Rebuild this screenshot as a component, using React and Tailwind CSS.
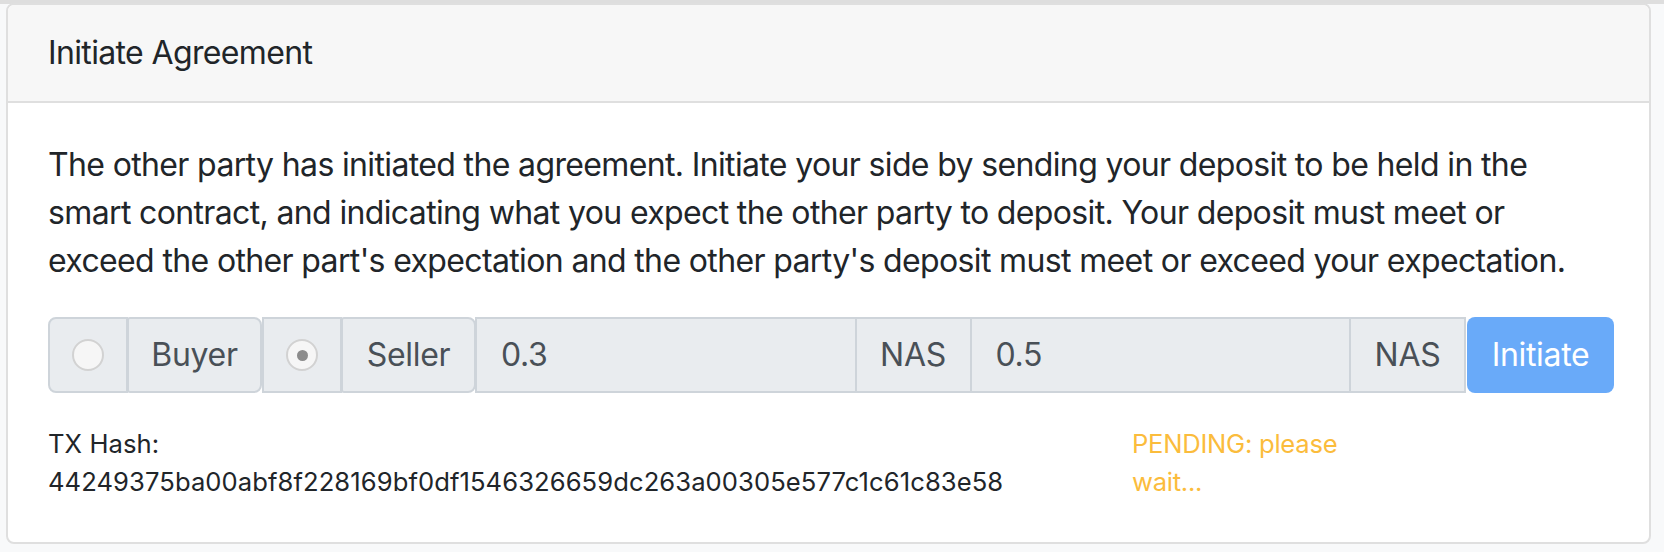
import React from "react";

function Radio({ checked }) {
  return (
    <div className="w-[32px] h-[32px] rounded-full border-2 border-[#d2d2d2] bg-[#f6f6f6] flex items-center justify-center">
      {checked ? <div className="w-[11px] h-[11px] rounded-full bg-[#8c8c8c]" /> : null}
    </div>
  );
}

export default function App() {
  const font = { fontFamily: "Inter, 'Liberation Sans', sans-serif" };
  return (
    <div className="min-h-[552px] bg-[#f8f9fa] text-[#212529]" style={font}>
      <div className="h-[4px] bg-[#dedede]" />
      <div className="ml-[6px] mr-[13px] -mt-[1px] border-2 border-[#dfdfdf] rounded-[8px] bg-white overflow-hidden">
        <div className="bg-[#f7f7f7] border-b-2 border-[#dfdfdf] px-[40px] py-[24px] text-[32px] leading-[48px] tracking-[-0.02em]">
          Initiate Agreement
        </div>
        <div className="px-[40px] pt-[38px] pb-[40px]">
          <p className="text-[32px] leading-[48px] mb-[32px] tracking-[-0.02em]">
            The other party has initiated the agreement. Initiate your side by sending your deposit to be held in the smart contract, and indicating what you expect the other party to deposit. Your deposit must meet or exceed the other part's expectation and the other party's deposit must meet or exceed your expectation.
          </p>
          <div className="flex h-[76px] -mr-[5px] text-[32px] text-[#495057] tracking-[-0.01em]">
            <div className="w-[80px] shrink-0 flex items-center justify-center bg-[#e9ecef] border-2 border-[#ced4da] rounded-l-[8px]">
              <Radio />
            </div>
            <div className="w-[135px] shrink-0 -ml-[1px] flex items-center justify-center bg-[#e9ecef] border-2 border-[#ced4da] rounded-r-[8px] rounded-l-[3px]">
              Buyer
            </div>
            <div className="w-[80px] shrink-0 flex items-center justify-center bg-[#e9ecef] border-2 border-[#ced4da]">
              <Radio checked />
            </div>
            <div className="w-[135px] shrink-0 -ml-[1px] flex items-center justify-center bg-[#e9ecef] border-2 border-[#ced4da] rounded-r-[8px] rounded-l-[3px]">
              Seller
            </div>
            <div className="flex-1 -ml-[1px] flex items-center px-[24px] bg-[#e9ecef] border-2 border-[#ced4da]">
              0.3
            </div>
            <div className="w-[117px] shrink-0 -ml-[2px] flex items-center justify-center bg-[#e9ecef] border-2 border-[#ced4da]">
              NAS
            </div>
            <div className="flex-1 -ml-[2px] flex items-center px-[24px] bg-[#e9ecef] border-2 border-[#ced4da]">
              0.5
            </div>
            <div className="w-[117px] shrink-0 -ml-[2px] flex items-center justify-center bg-[#e9ecef] border-2 border-[#ced4da]">
              NAS
            </div>
            <div className="w-[147px] shrink-0 ml-[1px] flex items-center justify-center bg-[#69aaf9] text-white rounded-[8px]">
              Initiate
            </div>
          </div>
          <div className="flex mt-[32px] text-[25.6px] leading-[38.4px]">
            <div className="w-[1084px] shrink-0 tracking-[0.003em]">
              <div>TX Hash:</div>
              <div>44249375ba00abf8f228169bf0df1546326659dc263a00305e577c1c61c83e58</div>
            </div>
            <div className="w-[216px] shrink-0 text-[#fbbc3c] tracking-[-0.01em]">
              PENDING: please wait...
            </div>
          </div>
        </div>
      </div>
    </div>
  );
}
